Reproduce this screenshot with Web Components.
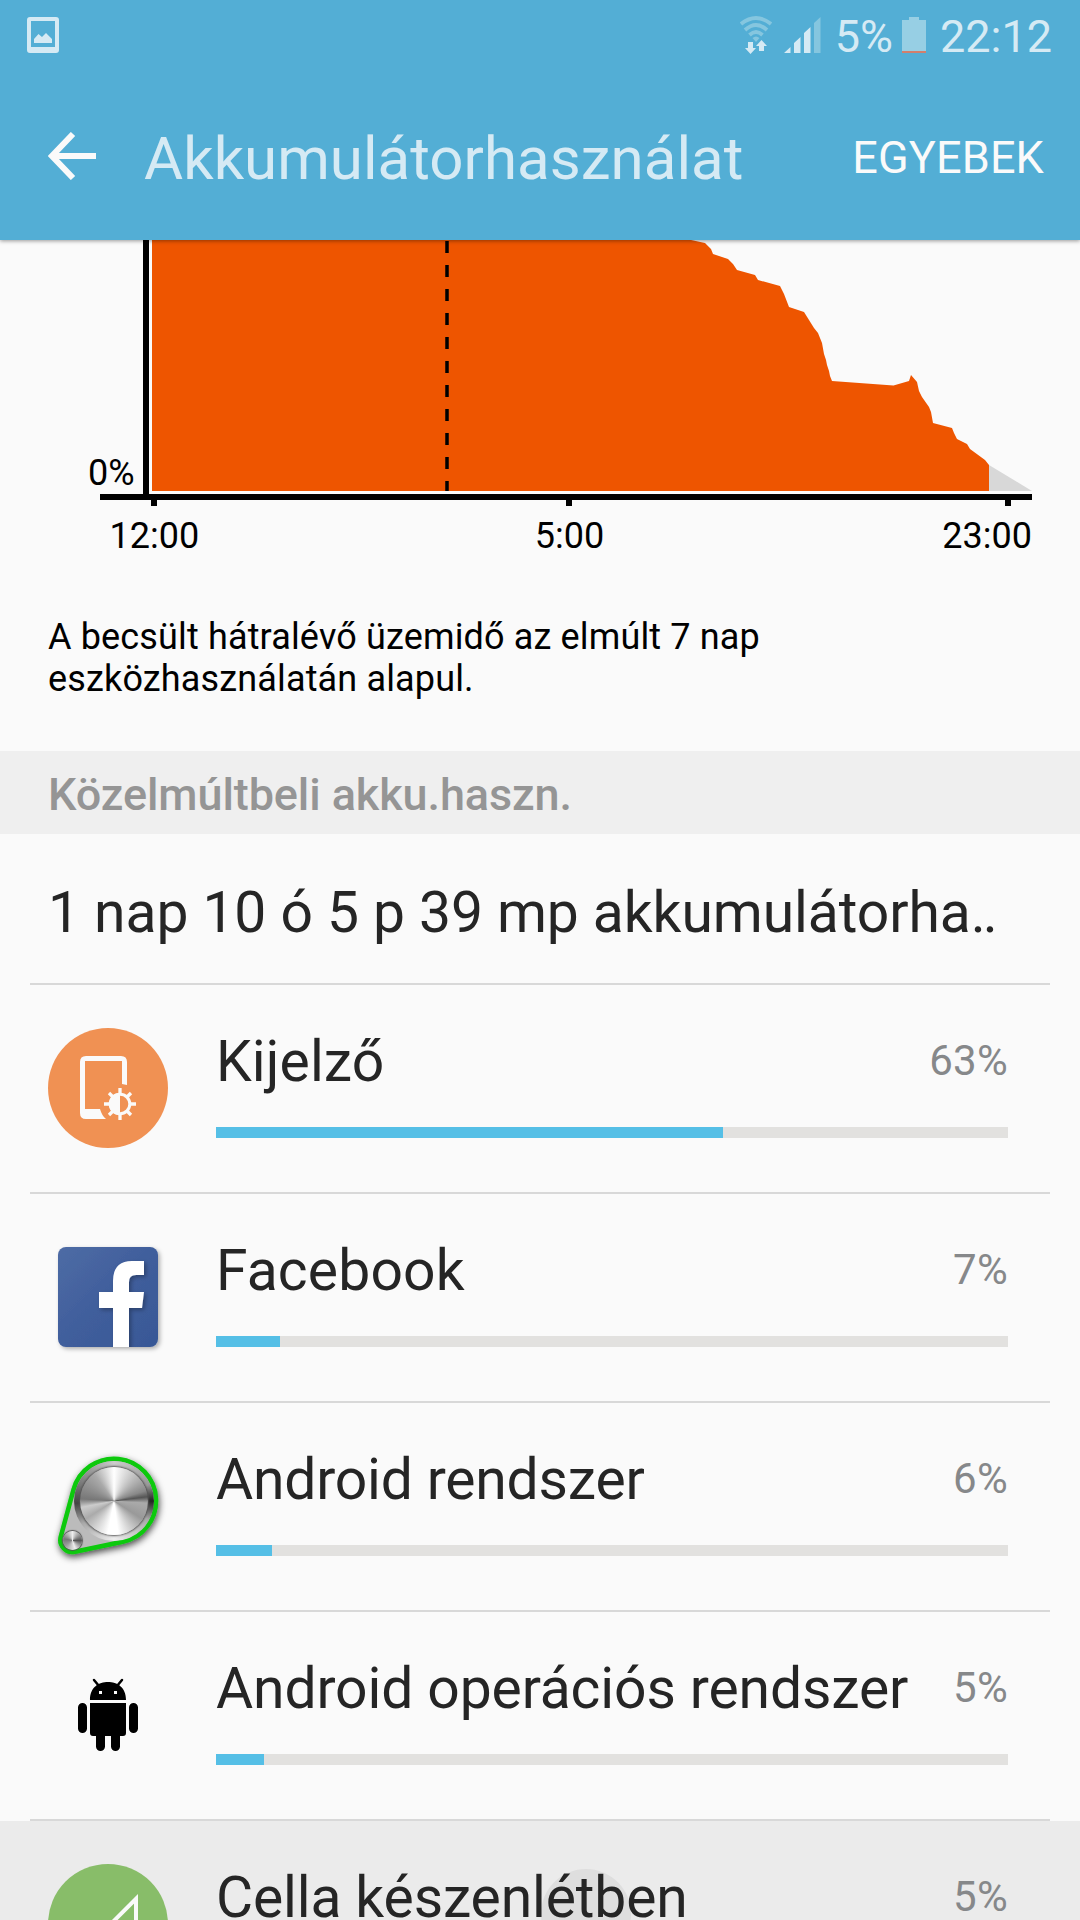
<!DOCTYPE html>
<html lang="hu"><head><meta charset="utf-8"><title>Akkumulátorhasználat</title>
<style>html,body{margin:0;background:#fafafa}body{width:1080px;height:1920px;overflow:hidden;font-family:Roboto,sans-serif}</style></head><body>
<battery-page></battery-page>
<script>
const define=(name,html,init)=>customElements.define(name,class extends HTMLElement{
  connectedCallback(){if(this.shadowRoot)return;const r=this.attachShadow({mode:'open'});r.innerHTML=html;if(init)init(this,r);}
});

define('status-bar',`<style>
:host{display:flex;height:72px;box-sizing:border-box;color:#d5eaf4;font-size:45px;line-height:53px;padding:10px 28px 0 27px;align-items:flex-start}
svg{display:block}.photo{margin-top:7px}.space{flex:1}
.wifi{margin:6px 12px 0 0}.sig{margin:7px 14px 0 0}.bat{margin:7px 14px 0 9px}
</style>
<svg class="photo" width="32" height="36"><path fill="#d5eaf4" fill-rule="evenodd" d="M3 0H29Q32 0 32 3V33Q32 36 29 36H3Q0 36 0 33V3Q0 0 3 0ZM4 4V30H28V4Z"/><path fill="#d5eaf4" d="M7 26V22L11.500 17L15 20L19 16L25 22V26Z"/></svg>
<span class="space"></span>
<svg class="wifi" width="32" height="38"><g fill="none" stroke="#85c6df" stroke-width="3.800"><path d="M1 8Q16 -4 31 8"/><path d="M5 14Q16 4 27 14"/><path d="M9.500 19Q16 13 22.500 19"/></g><path fill="#85c6df" d="M12.500 22Q16 19 19.500 22L16 26Z"/><path fill="#d5eaf4" d="M8 26H13V32H16L10.500 38L5 32H8ZM19 35V30H16L21.500 24L27 30H24V35Z"/></svg>
<svg class="sig" width="37" height="36"><path fill="#d5eaf4" d="M0 36L6.500 30V36ZM10 26L16.500 20V36H10ZM20 16L26.500 10V36H20Z"/><path fill="#85c6df" d="M30 6L36.500 0V36H30Z"/></svg>
<span>5%</span>
<svg class="bat" width="24" height="36"><path fill="#97cfe4" d="M7 0H17V3H24V34H0V3H7Z"/><path fill="#d27f6d" d="M0 34H24V36H0Z"/></svg>
<span>22:12</span>`);

define('app-bar',`<style>
:host{display:flex;height:168px;align-items:center;box-sizing:border-box;padding:0 36px 0 48px}
svg{display:block;margin-right:48px}h1{font-weight:400;font-size:60px;line-height:70px;letter-spacing:.04px;color:#d5eaf4;margin:6px 0 0;flex:1}
span{color:#fafafa;font-size:45px;line-height:54px;margin-top:4px;letter-spacing:.15px}
</style>
<svg width="48" height="48"><path d="M48 24H5M25 2L4 24L25 46" fill="none" stroke="#fafafa" stroke-width="6"/></svg>
<h1><slot></slot></h1><span><slot name="action"></slot></span>`);

define('battery-chart',`<style>:host{display:block;height:340px}svg{display:block}text{font-size:36px;fill:#000}</style>
<svg width="1080" height="340" viewBox="0 240 1080 340">
<path fill="#ee5500" d="M152 491V240H691L705 243L711 249L713 254L728 259L733 264L737 270L755 275L758 280L780 286L784 294L789 307L804 312L814 328L818 333L822 343L824 354L826 360L827 365L829 371L830 376L832 381L893.500 385.500L909 381L911 375L917 382L919 391L922 397L929 407L931 412L933 423L952 428L954 433L957 439L967 444L970 449L985 460L989 465V491Z"/>
<path fill="#d8d8d8" d="M989 465L1032 491H989Z"/>
<path d="M447 241V491" stroke="#000" stroke-width="3.500" stroke-dasharray="12 12"/>
<path d="M143 240H149V494H1032V500H1011V506H1005V500H572V506H566V500H157V506H151V500H100V494H143Z"/>
<text x="88" y="485">0%</text><text x="154.300" y="548" text-anchor="middle">12:00</text><text x="569.500" y="548" text-anchor="middle">5:00</text><text x="1032" y="548" text-anchor="end">23:00</text>
</svg>`);

define('usage-note',`<style>:host{display:block;height:171px;box-sizing:border-box;padding:36px 48px 0;font-size:36px;line-height:42px;letter-spacing:.15px;color:#000}</style><slot></slot>`);
define('section-title',`<style>:host{display:block;height:83px;background:#efefef;color:#959595;font-weight:500;font-size:45px;letter-spacing:-.1px;line-height:87px;padding-left:48px}</style><slot></slot>`);
define('usage-total',`<style>:host{display:block;height:149px;padding-left:48px;font-size:57px;letter-spacing:-.07px;line-height:157px;color:#252525;white-space:nowrap}::slotted(span){letter-spacing:-3px}</style><slot></slot>`);

define('usage-row',`<style>
:host{display:flex;position:relative;height:209px;box-sizing:border-box;padding:0 72px 0 48px}
:host::before{content:"";position:absolute;left:30px;right:30px;top:0;height:2px;background:#d8d8d8}
:host([pressed]){background:linear-gradient(transparent 2px,#ebebeb 2px)}
.icon{width:120px;height:120px;margin:45px 48px 0 0}.main{flex:1}
.line{position:relative;display:flex;justify-content:space-between;align-items:flex-start;height:144px;line-height:158px;color:#252525;font-size:57px}
.pct{color:#86888a;font-size:42px;line-height:155px;letter-spacing:.3px}.bar{height:11px;background:#e2e1df}.fill{height:11px;background:#55bfe6}
.ripple{display:none}:host([pressed]) .ripple{display:block;position:absolute;left:541px;top:50px;width:90px;height:90px;border-radius:50%;background:#dedede}
</style><i class="ripple"></i><div class="icon"><slot name="icon"></slot></div><div class="main"><div class="line"><span class="name"><slot></slot></span><span class="pct"></span></div><div class="bar"><div class="fill"></div></div></div>`,
(h,r)=>{r.querySelector('.pct').textContent=h.getAttribute('value')+'%';r.querySelector('.fill').style.width=h.getAttribute('fill')+'px';r.querySelector('.name').style.letterSpacing=h.getAttribute('track')+'px';});

define('display-icon',`<style>:host,svg{display:block}</style><svg width="120" height="120"><circle cx="60" cy="60" r="60" fill="#f09153"/><path fill="#fafafa" fill-rule="evenodd" d="M38 28H73Q79 28 79 34V57L74 56V33H37V81H52Q54 88 58 91H38Q32 91 32 85V34Q32 28 38 28Z"/><circle cx="72" cy="76" r="9.800" fill="none" stroke="#fafafa" stroke-width="3"/><path fill="#fafafa" d="M72 65A11 11 0 0 0 72 87Z"/><path stroke="#fafafa" stroke-width="3.300" d="M72 60V66M72 86V92M56 76H62M82 76H88M61 65L65 69M83 65L79 69M61 87L65 83M83 87L79 83"/></svg>`);

define('facebook-icon',`<style>:host,svg{display:block}</style><svg width="120" height="120"><defs><linearGradient id="b" x2="1" y2="1"><stop stop-color="#4e6ca5"/><stop offset=".5" stop-color="#405e9c"/><stop offset="1" stop-color="#385896"/></linearGradient><filter id="s" x="-20%" y="-20%" width="140%" height="140%"><feDropShadow dy="2" stdDeviation="2" flood-opacity=".3"/></filter><clipPath id="c"><rect x="10" y="10" width="100" height="100" rx="8"/></clipPath></defs>
<rect x="10" y="10" width="100" height="100" rx="8" fill="url(#b)" filter="url(#s)"/><g clip-path="url(#c)"><path fill="#fff" filter="url(#s)" d="M65 112V71H51V55H65V44Q65 24 84 24H96V38H88Q81 38 81 45V55H96L94 71H81V112Z"/></g></svg>`);

define('system-icon',`<style>:host,svg,div{display:block}.w{width:120px;height:120px;position:relative}svg{position:absolute;left:0;top:0;overflow:visible}.disc{position:absolute;border-radius:50%}
.a{left:26px;top:15px;width:80px;height:80px;background:conic-gradient(#ccc,#999 18%,#222 25%,#aaa 33%,#eee 50%,#aaa 65%,#444 74%,#777 82%,#ccc)}
.b{left:32px;top:21px;width:68px;height:68px;box-shadow:0 0 2px 1px #555;background:conic-gradient(#fff,#c5c5c5 10%,#888 20%,#555 23%,#aaa 26%,#999 34%,#fff 48%,#fff 53%,#aaa 66%,#ccc 72%,#777 76%,#aaa 90%,#fff)}
.c{left:15px;top:85px;width:19px;height:19px;box-shadow:0 0 1px 1px #555;background:conic-gradient(#eee,#555 25%,#eee 45%,#999 65%,#777 78%,#eee)}</style>
<div class="w"><svg width="120" height="120"><filter id="s" x="-20%" y="-20%" width="140%" height="140%"><feDropShadow dx="1" dy="3" stdDeviation="3.500" flood-opacity=".7"/></filter><path d="M25.500 43.700A42 42 0 1 1 74.500 95.800L26.700 105.700A12 12 0 0 1 12.700 90.900Z" fill="#bbb" stroke="#08c90b" stroke-width="4.500" filter="url(#s)"/></svg><div class="disc a"></div><div class="disc b"></div><div class="disc c"></div></div>`);

define('android-icon',`<style>:host,svg{display:block}</style><svg width="120" height="120"><g transform="translate(0 10)"><path d="M42 35C42 22 51 17 60 17S78 22 78 35ZM42 38H78V68Q78 71 75 71H45Q42 71 42 68Z"/><path stroke="#000" stroke-width="9" stroke-linecap="round" d="M34.500 42.500V63.500M85.500 42.500V63.500M52.500 69V81.500M67.500 69V81.500"/><path stroke="#000" stroke-width="2.500" stroke-linecap="round" d="M46 15L51 21M74 15L69 21"/><path fill="#fafafa" d="M51 26H54V29H51ZM66 26H69V29H66Z"/></g></svg>`);
define('signal-icon',`<style>:host,svg{display:block}</style><svg width="120" height="120"><circle cx="60" cy="60" r="60" fill="#88bd69"/><path d="M88 34.800V87H35.800Z" fill="none" stroke="#fafafa" stroke-width="4"/></svg>`);

define('battery-page',`<style>:host{display:flex;flex-direction:column;width:1080px;height:1920px;overflow:hidden;background:#fafafa}
header{background:#53aed5;box-shadow:0 1px 4px rgba(0,0,0,.4);position:relative;height:240px;flex:none}battery-chart,usage-note,section-title,usage-total,usage-row{flex:none}</style>
<header><status-bar></status-bar><app-bar>Akkumulátorhasználat<span slot="action">EGYEBEK</span></app-bar></header>
<battery-chart></battery-chart>
<usage-note>A becsült hátralévő üzemidő az elmúlt 7 nap<br>eszközhasználatán alapul.</usage-note>
<section-title>Közelmúltbeli akku.haszn.</section-title>
<usage-total>1 nap 10 ó 5 p 39 mp akkumulátorha<span>..</span></usage-total>
<usage-row value="63" fill="507" track=".1">Kijelző<display-icon slot="icon"></display-icon></usage-row>
<usage-row value="7" fill="64" track=".15">Facebook<facebook-icon slot="icon"></facebook-icon></usage-row>
<usage-row value="6" fill="56" track="-.19">Android rendszer<system-icon slot="icon"></system-icon></usage-row>
<usage-row value="5" fill="48" track="-.12">Android operációs rendszer<android-icon slot="icon"></android-icon></usage-row>
<usage-row value="5" fill="48" track="-.14" pressed>Cella készenlétben<signal-icon slot="icon"></signal-icon></usage-row>`);
</script></body></html>
